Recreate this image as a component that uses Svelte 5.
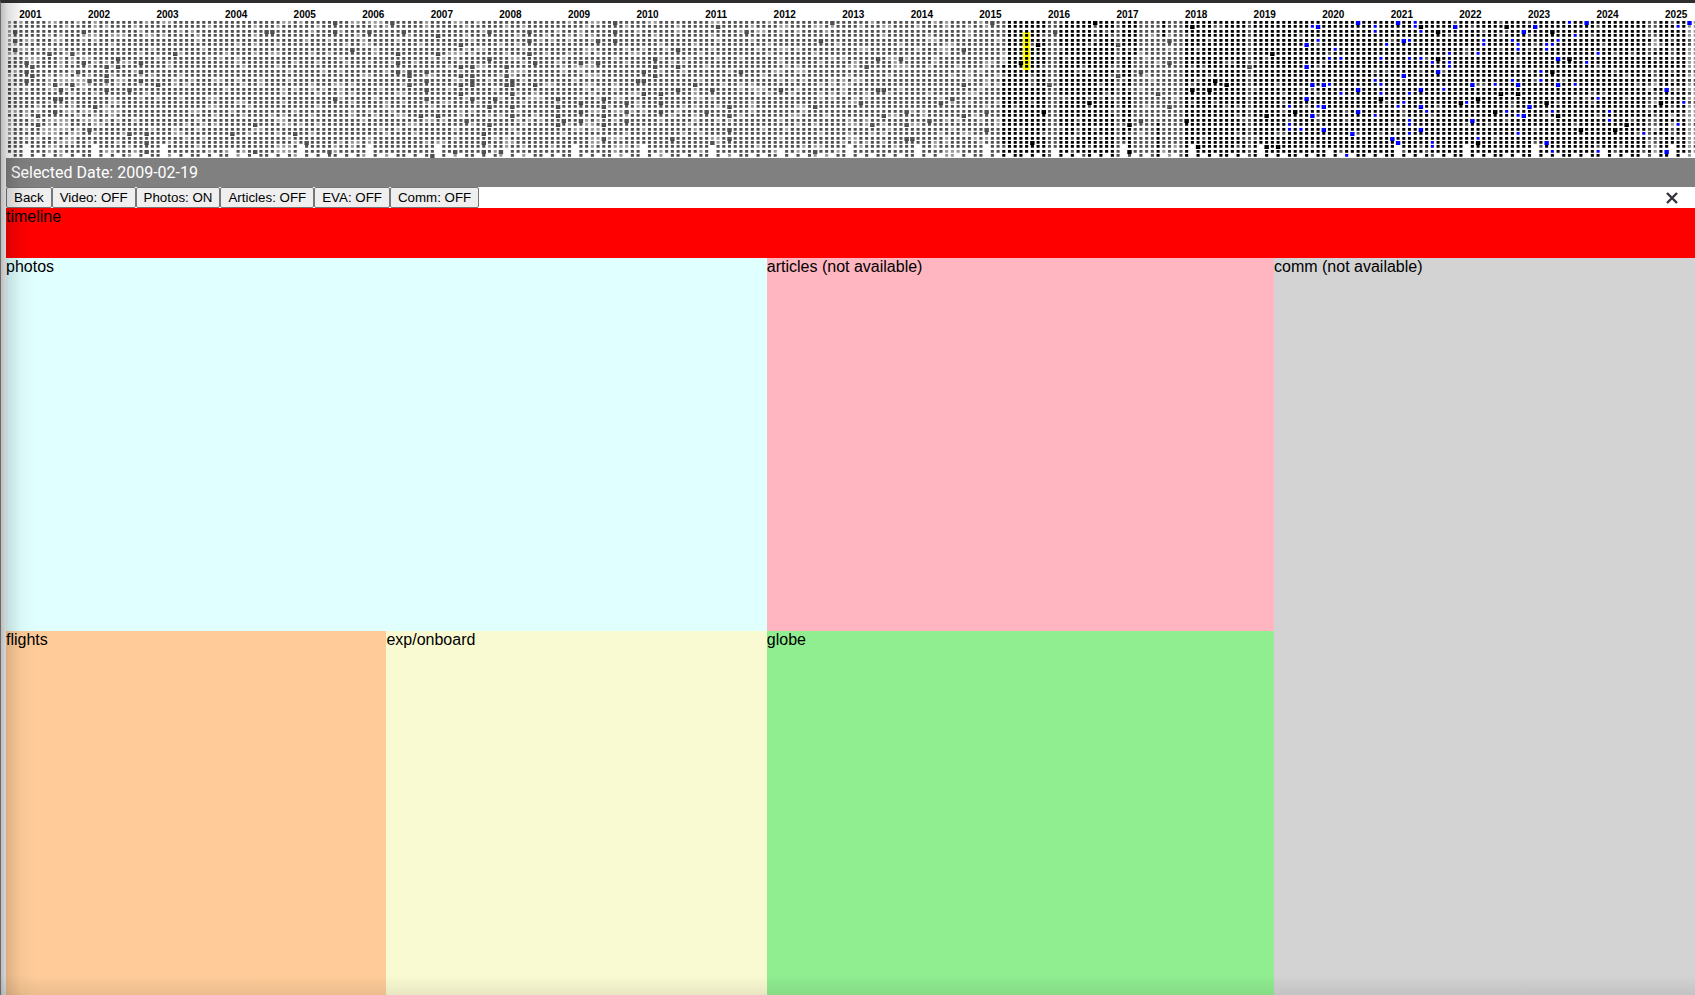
<script>
    const firstYear = 2000;
    const firstMonth = 10; // November 2000
    const monthCount = 296;
    const colStep = 40 / 7;
    const rowStep = 40 / 9;
    const selectedMonth = 178;

    // month index -> days, drawn larger than the ordinary ones
    const eventDays = {
        1: [2, 4, 6], 3: [9, 11, 13], 4: [10, 12], 5: [21, 23], 7: [7], 8: [14, 17, 20],
        9: [15, 17], 11: [7, 14], 12: [11], 13: [2, 9], 14: [13, 24], 15: [19],
        17: [10, 12, 13, 15], 19: [8, 10], 21: [15, 25], 23: [9, 11, 13], 24: [25, 27, 29],
        26: [14], 29: [7], 39: [25], 43: [23, 29], 45: [2], 46: [2], 50: [25], 52: [27],
        56: [29], 57: [0, 2, 17], 60: [6], 63: [2], 67: [0], 68: [7, 9, 11], 69: [2],
        70: [11, 12, 14], 72: [21], 73: [11, 13, 15, 17], 74: [30], 75: [3, 7, 21], 78: [29],
        79: [5, 10, 12, 14, 16], 80: [22], 81: [10, 12, 13, 14, 17], 83: [25, 27, 29],
        84: [2, 8, 19, 23], 85: [17], 86: [29], 87: [10, 12, 14], 88: [13, 14, 16, 19, 21],
        91: [2, 4, 7], 92: [9, 14], 96: [17, 19, 21, 23], 97: [22], 100: [9, 18, 20, 22],
        103: [4, 9], 104: [17, 19, 21, 23, 26], 106: [0, 2, 4], 108: [18, 20, 22], 110: [13],
        111: [11, 13, 16], 113: [8, 10, 12], 114: [16, 18, 20], 116: [26], 117: [6, 10, 15],
        120: [14], 122: [20], 123: [15, 27], 124: [1], 126: [19, 21, 24, 26], 128: [11],
        129: [2], 135: [15], 141: [19, 29], 142: [4], 144: [0], 149: [18], 150: [10],
        151: [23], 152: [8, 15], 153: [15, 21], 156: [8], 157: [20, 23, 26], 158: [26],
        161: [22], 163: [18], 165: [17], 167: [6, 14, 21], 171: [20, 24], 172: [0],
        177: [9], 179: [27], 180: [5], 181: [20], 182: [14], 183: [2], 189: [18], 190: [0],
        194: [5, 12], 196: [23, 29], 198: [11, 22], 201: [16], 203: [4, 9, 19], 206: [22],
        207: [1, 15], 208: [28], 210: [15], 211: [13], 213: [14], 217: [10], 220: [21, 28],
        221: [7], 222: [28], 225: [20], 240: [17], 247: [1], 250: [2, 8], 254: [18],
        257: [17, 27], 260: [20], 261: [16], 262: [1], 264: [16], 269: [18], 270: [2, 11],
        271: [21], 273: [8], 275: [24], 281: [24], 283: [23], 289: [18]
    };

    const commDays = {
        224: [19, 23, 24], 226: [24], 228: [1], 229: [4, 19], 231: [8, 14], 232: [6],
        233: [8, 16], 234: [30], 239: [1, 2, 13, 21], 240: [8, 14, 16], 241: [5], 243: [19],
        244: [18], 245: [4, 8, 16, 22, 23, 25], 246: [0, 1], 247: [2, 8], 248: [20],
        249: [9, 27, 28], 251: [15], 252: [7, 9, 10], 255: [18], 257: [7, 26], 258: [4, 5],
        260: [14], 262: [20], 263: [4, 13], 264: [5, 6, 21, 25], 268: [11, 13], 269: [5, 6],
        270: [5, 20, 29], 271: [4], 273: [0], 274: [3, 14], 276: [9], 278: [7, 17, 29],
        280: [20, 22], 286: [25], 292: [1, 23], 293: [18]
    };

    const commEventDays = {
        227: [5, 10, 17], 228: [14, 21], 229: [1], 230: [14, 19, 24], 235: [25],
        236: [0, 15, 20], 242: [26], 243: [0, 27], 244: [4, 12], 247: [15, 19, 24], 250: [11],
        253: [1], 256: [14, 22], 264: [14], 265: [2, 21], 266: [19], 267: [1], 269: [27],
        271: [8, 14], 276: [0], 290: [15, 29], 294: [0]
    };

    const has = (days, col, row) => days[col]?.includes(row) ?? false;

    function noise(col, row) {
        const n = Math.sin(col * 12.9898 + row * 78.233) * 43758.5453;
        return n - Math.floor(n);
    }

    function toneOf(col, row) {
        const n = noise(col, row);
        if (col >= 294) return n < 0.85 ? 'light' : 'mid';
        if (col < 174 || (col === 174 && row < 10)) {
            if (has(eventDays, col, row)) return 'mid';
            const share = 0.04 + noise(col, 99) * (col < 20 ? 0.5 : 0.22);
            return n < share ? 'light' : 'mid';
        }
        if (col === 182 || col === 183 || col === 194 || col === 217) return 'mid';
        if (col === 197) return row < 8 ? 'dark' : 'mid';
        if (col === 201 && row > 22) return 'dark';
        if (col === 202 && row < 4) return 'dark';
        if (col > 197 && col < 206) return n < 0.06 ? 'light' : 'mid';
        if (col === 287 || col === 288 || col === 291) return n < 0.1 ? 'light' : n < 0.7 ? 'mid' : 'dark';
        return n < 0.07 && !has(eventDays, col, row) ? 'mid' : 'dark';
    }

    function cell(x, y, big) {
        const width = big ? 4.4 : 3.1;
        const height = big ? 4 : 2.7;
        const left = (x - width / 2).toFixed(2);
        const top = Math.round(y - 1.5);
        return `M${left} ${top}h${width}v${height}h-${width}z`;
    }

    const colX = (col) => 3.5 + col * colStep;
    const rowY = (row) => 19.5 + row * rowStep;

    const paths = { light: '', mid: '', dark: '', comm: '' };
    const years = [];

    for (let col = 0; col < monthCount; col++) {
        const month = (firstMonth + col) % 12;
        const year = firstYear + Math.floor((firstMonth + col) / 12);
        const days = new Date(year, month + 1, 0).getDate();
        if (month === 0) years.push({ year, x: colX(col) + 9.5 });

        for (let row = 0; row < days; row++) {
            const big = has(eventDays, col, row) || has(commEventDays, col, row);
            const comm = has(commDays, col, row) || has(commEventDays, col, row);
            const tone = comm ? 'comm' : toneOf(col, row);
            paths[tone] += cell(colX(col), rowY(row), big);
        }
    }

    let toggles = $state([
        { name: 'Video', on: false },
        { name: 'Photos', on: true },
        { name: 'Articles', on: false },
        { name: 'EVA', on: false },
        { name: 'Comm', on: false }
    ]);

    let selectedDate = $state('2009-02-19');
</script>

<div class="page">
    <div class="viewer">
        <svg class="calendar" width="100%" height="155">
            {#each years as { year, x }}
                <text {x} y="15" text-anchor="middle">{year}</text>
            {/each}
            <rect
                class="selection"
                x={Math.round(colX(selectedMonth) - 3.5)}
                y={Math.round(rowY(3) - 3.5)}
                width="7"
                height="38"
            />
            <path class="light" d={paths.light} />
            <path class="mid" d={paths.mid} />
            <path class="dark" d={paths.dark} />
            <path class="comm-day" d={paths.comm} />
        </svg>

        <div class="selected-date">Selected Date: {selectedDate}</div>

        <div class="toolbar">
            <button>Back</button>
            {#each toggles as toggle}
                <button onclick={() => (toggle.on = !toggle.on)}>{toggle.name}: {toggle.on ? 'ON' : 'OFF'}</button>
            {/each}
            <button class="close" aria-label="Close">
                <svg width="12" height="12" viewBox="0 0 12 12">
                    <path d="M1 1L11 11M11 1L1 11" stroke="#33333b" stroke-width="2.4" />
                </svg>
            </button>
        </div>

        <div class="timeline">timeline</div>

        <div class="panels">
            <div class="photos">photos</div>
            <div class="articles">articles (not available)</div>
            <div class="comm">comm (not available)</div>
            <div class="flights">flights</div>
            <div class="onboard">exp/onboard</div>
            <div class="globe">globe</div>
        </div>
    </div>
    <div class="shade"></div>
</div>

<style>
    :global(body) {
        overflow: hidden;
    }

    .page {
        position: relative;
        height: 100vh;
        overflow: hidden;
        box-sizing: border-box;
        border-top: 3px solid #2d2d2d;
        border-left: 1px solid #6b6b6b;
        background: #fff;
        font: 16px/18px "Liberation Sans", Arial, sans-serif;
        color: #000;
    }

    .viewer {
        padding-left: 5px;
    }

    .calendar {
        display: block;
        overflow: hidden;
    }

    .calendar text {
        font-size: 10px;
        font-weight: bold;
    }

    .selection {
        fill: #ff0;
    }

    .light {
        fill: #999;
    }

    .mid {
        fill: #505050;
    }

    .dark {
        fill: #000;
    }

    .comm-day {
        fill: #00f;
    }

    .selected-date {
        padding: 5px;
        background: #808080;
        color: #fff;
        font-family: Roboto, sans-serif;
        line-height: 19px;
    }

    .toolbar {
        display: flex;
        align-items: center;
        height: 21px;
    }

    button {
        height: 21px;
        padding: 0 7px;
        border: 1px solid #767676;
        border-radius: 2px;
        background: #efefef;
        color: #000;
        font-family: "Liberation Sans", Arial, sans-serif;
    }

    .close {
        display: flex;
        align-items: center;
        margin-left: auto;
        margin-right: 10px;
        border: none;
        background: none;
    }

    .timeline {
        height: 50px;
        background: #f00;
    }

    .panels {
        display: grid;
        grid-template-columns: 3fr 3fr 4fr 3.32fr;
        grid-template-rows: 37.5vh 37.5vh;
        grid-template-areas:
            "photos photos articles comm"
            "flights onboard globe comm";
    }

    .photos {
        grid-area: photos;
        background: #e0ffff;
    }

    .articles {
        grid-area: articles;
        background: #ffb6c1;
    }

    .comm {
        grid-area: comm;
        background: #d3d3d3;
    }

    .flights {
        grid-area: flights;
        background: #ffcc99;
    }

    .onboard {
        grid-area: onboard;
        background: #fafad2;
    }

    .globe {
        grid-area: globe;
        background: #90ee90;
    }

    .shade {
        position: absolute;
        inset: 0;
        pointer-events: none;
        background:
            linear-gradient(to right, rgba(0, 0, 0, 0.26), rgba(0, 0, 0, 0.12) 7px, rgba(0, 0, 0, 0.03) 20px, transparent 36px),
            linear-gradient(to top, rgba(0, 0, 0, 0.08), transparent 20px);
    }
</style>
